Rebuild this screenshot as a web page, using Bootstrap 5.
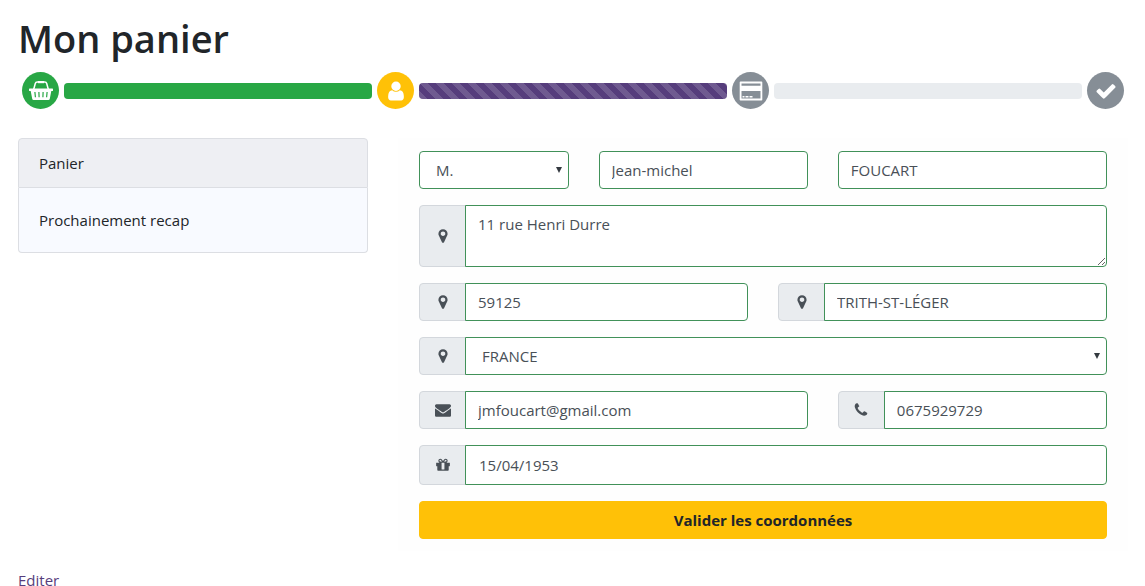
<!DOCTYPE html>
<html lang="fr">
<head>
<meta charset="utf-8">
<meta name="viewport" content="width=device-width, initial-scale=1">
<title>Mon panier</title>
<link href="https://cdn.jsdelivr.net/npm/bootstrap@5.3.0/dist/css/bootstrap.min.css" rel="stylesheet">
<style>
  body { font-family: "Segoe UI", "Open Sans", "Noto Sans", sans-serif; font-size: 15px; line-height: 24px; color: #212529; background: #fff; overflow-x: hidden; }
  .page { padding: 14px 17px 0 18px; }
  .page-title { font-size: 38px; line-height: 48px; font-weight: 600; margin: 0 0 10px; }

  .steps { gap: 5px; padding: 0 4px; margin-bottom: 29px; }
  .step-icon { width: 37px; height: 37px; background: #868e96; color: #fff; }
  .step-icon svg { width: 24px; height: 24px; }
  .step-icon.done { background: #28a745; }
  .step-icon.current { background: #ffc107; }
  .step-icon .glyph-sm { width: 22px; height: 22px; }
  .steps .progress { --bs-progress-height: 16px; --bs-progress-bg: #e9ecef; --bs-progress-border-radius: 4px; }
  .bar-done { background-color: #28a745; }
  .bar-current { background-color: #563d7c; }

  .main-row { --bs-gutter-x: 30px; }
  .recap { --bs-list-group-bg: #f8faff; --bs-list-group-border-color: #dcdee3; --bs-list-group-border-radius: 4px; --bs-list-group-color: #212529; --bs-list-group-item-padding-x: 20px; --bs-list-group-item-padding-y: 20px; }
  .recap .recap-head { background: #eeeff3; padding-top: 12px; padding-bottom: 12px; }

  .coords { background: #fefefe; padding: 13px 21px 12px; }
  .coords .row { --bs-gutter-x: 30px; }
  .coords .form-control, .coords .form-select { font-size: 15px; line-height: 24px; color: #495057; border-radius: 4px; background-color: #fff; border-color: #419159; }
  .coords textarea.form-control { min-height: 62px; }
  .coords .form-select { padding-left: 16px; background-image: url("data:image/svg+xml,%3Csvg xmlns='http://www.w3.org/2000/svg' viewBox='0 0 6 6'%3E%3Cpath d='M0 0h6L3 6z' fill='%23343a40'/%3E%3C/svg%3E"); background-size: 6px 6px; background-position: right 6px center; }
  .coords .date-field { padding: 7px 13px; }
  .coords .input-group > .input-group-text { width: 47px; justify-content: center; padding: 0; color: #495057; background: #e9ecef; border-color: #d3d7dc; border-radius: 4px 0 0 4px; }
  .coords .input-group > .form-control, .coords .input-group > .form-select { border-radius: 0 4px 4px 0; }
  .input-group-text svg { width: 16px; height: 16px; }
  .btn-validate { --bs-btn-bg: #ffc107; --bs-btn-border-color: #ffc107; --bs-btn-color: #212529; --bs-btn-hover-bg: #e0a800; --bs-btn-hover-border-color: #d39e00; --bs-btn-border-radius: 4px; --bs-btn-font-size: 15px; line-height: 24px; font-weight: 700; }
  .page-footer { padding-top: 21px; line-height: 16px; }
  .edit-link { color: #563d7c; text-decoration: none; }
</style>
</head>
<body>
<svg class="d-none" aria-hidden="true">
  <symbol id="i-marker" viewBox="0 0 1792 1792"><path fill="currentColor" d="M1152 640q0-106-75-181t-181-75-181 75-75 181 75 181 181 75 181-75 75-181zm256 0q0 109-33 179l-364 774q-16 33-47.500 52t-67.500 19-67.500-19-46.500-52l-365-774q-33-70-33-179 0-212 150-362t362-150 362 150 150 362z"/></symbol>
  <symbol id="i-mail" viewBox="0 0 1792 1792"><path fill="currentColor" d="M1792 710v794q0 66-47 113t-113 47h-1472q-66 0-113-47t-47-113v-794q44 49 101 87 362 246 497 345 57 42 92.500 65.500t94.500 48 110 24.500h2q51 0 110-24.500t94.500-48 92.500-65.500q170-123 498-345 57-39 100-87zm0-294q0 79-49 151t-122 123q-376 261-468 325-10 7-42.500 31t-54 38.500-52 32.500-57.500 27-50 9h-2q-23 0-50-9t-57.500-27-52-32.500-54-38.500-42.500-31q-91-64-262-182.500t-205-142.500q-62-42-117-115.500t-55-136.500q0-78 41.500-130t118.500-52h1472q65 0 112.500 47t47.500 113z"/></symbol>
  <symbol id="i-phone" viewBox="0 0 1792 1792"><path fill="currentColor" d="M1600 1240q0 27-10 70.500t-21 68.500q-21 50-122 106-94 51-186 51-27 0-53-3.500t-57.500-12.500-47-14.500-55.500-20.500-49-18q-98-35-175-83-127-79-264-216t-216-264q-48-77-83-175-3-9-18-49t-20.500-55.500-14.500-47-12.500-57.500-3.500-53q0-92 51-186 56-101 106-122 25-11 68.500-21t70.500-10q14 0 21 3 18 6 53 76 11 19 30 54t35 63.500 31 53.500q3 4 17.500 25t21.500 35.500 7 28.500q0 20-28.500 50t-62 55-62 53-28.500 46q0 9 5 22.500t8.500 20.500 14 24 11.500 19q76 137 174 235t235 174q2 1 19 11.500t24 14 20.500 8.500 22.500 5q18 0 46-28.500t53-62 55-62 50-28.500q14 0 28.500 7t35.500 21.500 25 17.500q25 15 53.500 31t63.500 35 54 30q70 35 76 53 3 7 3 21z"/></symbol>
  <symbol id="i-gift" viewBox="0 0 1792 1792"><path fill="currentColor" d="M1056 1356v-716h-320v716q0 25 18 38.500t46 13.500h192q28 0 46-13.500t18-38.500zm-456-844h195l-126-161q-26-31-69-31-40 0-68 28t-28 68 28 68 68 28zm688-96q0-40-28-68t-68-28q-43 0-69 31l-125 161h194q40 0 68-28t28-68zm376 256v320q0 14-9 23t-23 9h-96v416q0 40-28 68t-68 28h-1088q-40 0-68-28t-28-68v-416h-96q-14 0-23-9t-9-23v-320q0-14 9-23t23-9h440q-93 0-158.500-65.500t-65.500-158.500 65.500-158.500 158.500-65.500q107 0 168 77l128 165 128-165q61-77 168-77 93 0 158.500 65.500t65.500 158.500-65.500 158.500-158.500 65.500h440q14 0 23 9t9 23z"/></symbol>
  <symbol id="i-user" viewBox="0 0 1792 1792"><path fill="currentColor" d="M1536 1399q0 109-62.500 187t-150.500 78h-854q-88 0-150.500-78t-62.500-187q0-85 8.500-160.500t31.500-152 58.500-131 94-89 134.500-34.500q131 128 313 128t313-128q76 0 134.500 34.500t94 89 58.500 131 31.500 152 8.500 160.500zm-256-887q0 159-112.500 271.500t-271.500 112.500-271.500-112.500-112.500-271.500 112.500-271.500 271.500-112.500 271.500 112.500 112.500 271.500z"/></symbol>
  <symbol id="i-check" viewBox="0 0 1792 1792"><path fill="currentColor" d="M1671 566q0 40-28 68l-724 724-136 136q-28 28-68 28t-68-28l-136-136-362-362q-28-28-28-68t28-68l136-136q28-28 68-28t68 28l294 295 656-657q28-28 68-28t68 28l136 136q28 28 28 68z"/></symbol>
  <symbol id="i-basket" viewBox="0 0 24 24"><path d="M4.500 11 6.300 4.500Q6.700 3 8.200 3h7.600q1.500 0 1.900 1.500L19.500 11" fill="none" stroke="currentColor" stroke-width="1.500"/><path d="M9 2h6v2.200H9z" fill="currentColor"/><path fill="currentColor" fill-rule="evenodd" d="M1 9.500h22a1.200 1.200 0 0 1 0 2.600h-.7l-1.500 7.700q-.2 1.200-1.400 1.200H4.600q-1.200 0-1.400-1.200L1.700 12.100H1a1.200 1.200 0 0 1 0-2.600zM5.300 13l.5 5.300h1.200L6.500 13zm4 0 .2 5.300h1.200L10.500 13zm4.200 0-.2 5.300h1.200l.2-5.300zm4 0-.5 5.300h1.200l.5-5.300z"/></symbol>
  <symbol id="i-card" viewBox="0 0 24 24"><path fill="currentColor" fill-rule="evenodd" d="M1.500 2.500h21q.8 0 .8.800v17.400q0 .8-.8.800h-21q-.8 0-.8-.8V3.300q0-.8.800-.8zM2.500 4.500v2.300h19V4.500zm0 7.500v7.500h19V12zM3.500 17h2v1.500h-2zm3 0h3v1.500h-3zm4 0h3v1.500h-3z"/></symbol>
</svg>

<div class="container-fluid page">
  <h1 class="page-title">Mon panier</h1>

  <div class="steps d-flex align-items-center">
    <span class="step-icon done rounded-circle d-flex align-items-center justify-content-center flex-shrink-0"><svg aria-hidden="true"><use href="#i-basket"/></svg></span>
    <div class="progress flex-fill" role="progressbar" aria-label="Panier" aria-valuenow="100" aria-valuemin="0" aria-valuemax="100"><div class="progress-bar bar-done w-100"></div></div>
    <span class="step-icon current rounded-circle d-flex align-items-center justify-content-center flex-shrink-0"><svg class="glyph-sm" aria-hidden="true"><use href="#i-user"/></svg></span>
    <div class="progress flex-fill" role="progressbar" aria-label="Coordonnées" aria-valuenow="100" aria-valuemin="0" aria-valuemax="100"><div class="progress-bar progress-bar-striped bar-current w-100"></div></div>
    <span class="step-icon rounded-circle d-flex align-items-center justify-content-center flex-shrink-0"><svg aria-hidden="true"><use href="#i-card"/></svg></span>
    <div class="progress flex-fill" role="progressbar" aria-label="Paiement" aria-valuenow="0" aria-valuemin="0" aria-valuemax="100"></div>
    <span class="step-icon rounded-circle d-flex align-items-center justify-content-center flex-shrink-0"><svg class="glyph-sm" aria-hidden="true"><use href="#i-check"/></svg></span>
  </div>

  <div class="row main-row">
    <div class="col-md-4">
      <ul class="list-group recap">
        <li class="list-group-item recap-head">Panier</li>
        <li class="list-group-item">Prochainement recap</li>
      </ul>
    </div>

    <div class="col-md-8">
      <form class="coords">
        <div class="row mb-3">
          <div class="col-3">
            <select class="form-select" aria-label="Civilité"><option selected>M.</option><option>Mme</option></select>
          </div>
          <div class="col-4"><input type="text" class="form-control" aria-label="Prénom" value="Jean-michel"></div>
          <div class="col-5"><input type="text" class="form-control" aria-label="Nom" value="FOUCART"></div>
        </div>
        <div class="input-group mb-3">
          <label class="input-group-text" for="adresse" aria-label="Adresse"><svg aria-hidden="true"><use href="#i-marker"/></svg></label>
          <textarea class="form-control" id="adresse" rows="2">11 rue Henri Durre</textarea>
        </div>
        <div class="row mb-3">
          <div class="col-6">
            <div class="input-group">
              <label class="input-group-text" for="cp" aria-label="Code postal"><svg aria-hidden="true"><use href="#i-marker"/></svg></label>
              <input type="text" class="form-control" id="cp" value="59125">
            </div>
          </div>
          <div class="col-6">
            <div class="input-group">
              <label class="input-group-text" for="ville" aria-label="Ville"><svg aria-hidden="true"><use href="#i-marker"/></svg></label>
              <input type="text" class="form-control" id="ville" value="TRITH-ST-LÉGER">
            </div>
          </div>
        </div>
        <div class="input-group mb-3">
          <label class="input-group-text" for="pays" aria-label="Pays"><svg aria-hidden="true"><use href="#i-marker"/></svg></label>
          <select class="form-select" id="pays"><option selected>FRANCE</option><option>BELGIQUE</option></select>
        </div>
        <div class="row mb-3">
          <div class="col-7">
            <div class="input-group">
              <label class="input-group-text" for="email" aria-label="E-mail"><svg aria-hidden="true"><use href="#i-mail"/></svg></label>
              <input type="email" class="form-control" id="email" value="jmfoucart@gmail.com">
            </div>
          </div>
          <div class="col-5">
            <div class="input-group">
              <label class="input-group-text" for="tel" aria-label="Téléphone"><svg aria-hidden="true"><use href="#i-phone"/></svg></label>
              <input type="tel" class="form-control" id="tel" value="0675929729">
            </div>
          </div>
        </div>
        <div class="input-group mb-3">
          <label class="input-group-text" for="naissance" aria-label="Date de naissance"><svg aria-hidden="true"><use href="#i-gift"/></svg></label>
          <input type="text" class="form-control date-field" id="naissance" value="15/04/1953">
        </div>
        <button type="submit" class="btn btn-validate w-100">Valider les coordonnées</button>
      </form>
    </div>
  </div>

  <div class="page-footer"><a class="edit-link" href="#">Editer</a></div>
</div>
<script src="https://cdn.jsdelivr.net/npm/bootstrap@5.3.0/dist/js/bootstrap.bundle.min.js"></script>
</body>
</html>
